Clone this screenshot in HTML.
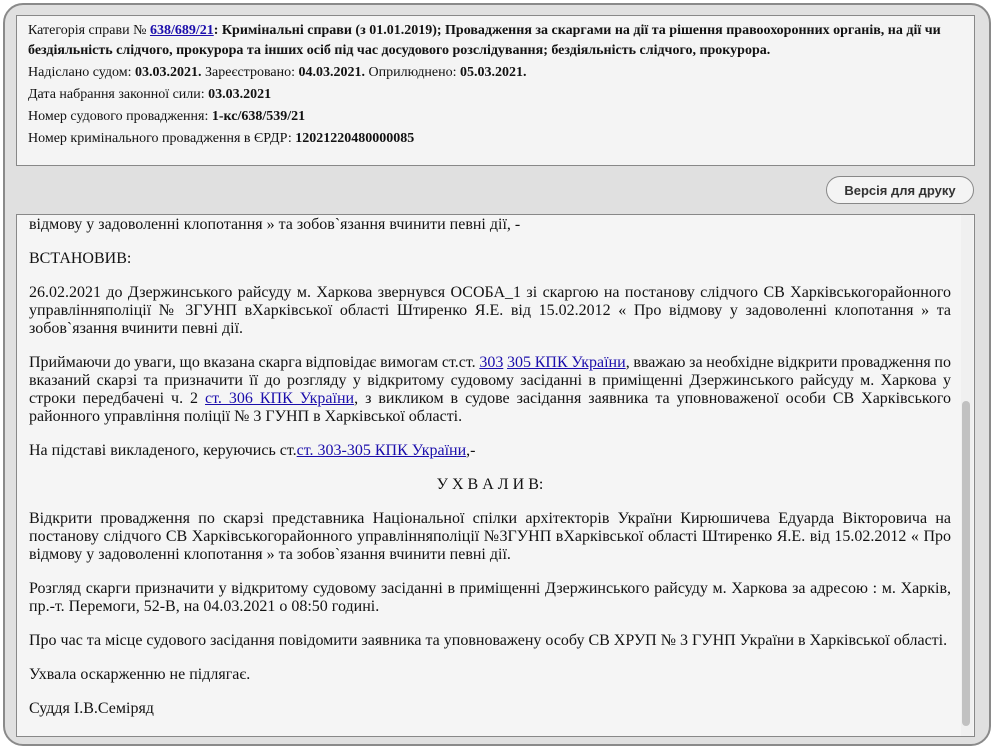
<!DOCTYPE html>
<html><head><meta charset="utf-8"><style>
html,body{margin:0;padding:0;background:#fff;width:995px;height:750px;overflow:hidden}
.outer{position:absolute;left:3px;top:3px;width:984px;height:739px;border:2px solid #8a8a8a;border-radius:20px;background:#e0e0e0}
.top{position:absolute;left:16px;top:15px;width:957px;height:149px;border:1px solid #888;background:#f4f4f4;font:14px/22px "Liberation Serif",serif;color:#111}
.top div{position:absolute;left:11px;white-space:nowrap}
a{color:#1a0dab;text-decoration:underline}
.btn{position:absolute;left:826px;top:176px;width:148px;height:28px;border:1px solid #888;border-radius:15px;background:#f4f4f4;font:bold 13px/28px "Liberation Sans",sans-serif;color:#333;text-align:center;box-sizing:border-box}
.content{position:absolute;left:16px;top:214px;width:957px;height:521px;border:1px solid #888;background:#f5f5f5;overflow:hidden;font:16px/18px "Liberation Serif",serif;color:#111}
.inner{position:absolute;left:12px;top:1px;width:922px}
.inner p{margin:0 0 16px;text-align:justify}
.j{display:block;text-align:justify;text-align-last:justify}
.sb{position:absolute;right:1px;top:0;width:12px;height:521px;background:#f0f0f0}
.th{position:absolute;right:3px;top:186px;width:8px;height:325px;background:#c1c1c1;border-radius:4px}
</style></head><body>
<div class="outer"></div>
<div class="top">
<div style="top:4px">Категорія справи № <a><b>638/689/21</b></a><b>: Кримінальні справи (з 01.01.2019); Провадження за скаргами на дії та рішення правоохоронних органів, на дії чи</b></div>
<div style="top:24px"><b>бездіяльність слідчого, прокурора та інших осіб під час досудового розслідування; бездіяльність слідчого, прокурора.</b></div>
<div style="top:46px">Надіслано судом: <b>03.03.2021.</b> Зареєстровано: <b>04.03.2021.</b> Оприлюднено: <b>05.03.2021.</b></div>
<div style="top:68px">Дата набрання законної сили: <b>03.03.2021</b></div>
<div style="top:90px">Номер судового провадження: <b>1-кс/638/539/21</b></div>
<div style="top:112px">Номер кримінального провадження в ЄРДР: <b>12021220480000085</b></div>
</div>
<div class="btn">Версія для друку</div>
<div class="content">
<div class="inner">
<p>відмову у задоволенні клопотання » та зобов`язання вчинити певні дії, -</p>
<p>ВСТАНОВИВ:</p>
<p><span class="j">26.02.2021 до Дзержинського райсуду м. Харкова звернувся ОСОБА_1 зі скаргою на постанову слідчого СВ Харківськогорайонного</span><span class="j">управлінняполіції №&nbsp;3ГУНП вХарківської області Штиренко Я.Е. від 15.02.2012 « Про відмову у задоволенні клопотання » та</span>зобов`язання вчинити певні дії.</p>
<p><span class="j" style="white-space:nowrap;word-spacing:-2.3px">Приймаючи до уваги, що вказана скарга відповідає вимогам ст.ст. <a>303</a> <a>305 КПК України</a>, вважаю за необхідне відкрити провадження по</span><span class="j">вказаний скарзі та призначити її до розгляду у відкритому судовому засіданні в приміщенні Дзержинського райсуду м. Харкова у</span><span class="j">строки передбачені ч. 2 <a>ст. 306 КПК України</a>, з викликом в судове засідання заявника та уповноваженої особи СВ Харківського</span>районного управління поліції № 3 ГУНП в Харківської області.</p>
<p>На підставі викладеного, керуючись ст.<a>ст. 303-305 КПК України</a>,-</p>
<p style="text-align:center">У Х В А Л И В:</p>
<p>Відкрити провадження по скарзі представника Національної спілки архітекторів України Кирюшичева Едуарда Вікторовича на постанову слідчого СВ Харківськогорайонного управлінняполіції №3ГУНП вХарківської області Штиренко Я.Е. від 15.02.2012 « Про відмову у задоволенні клопотання » та зобов`язання вчинити певні дії.</p>
<p>Розгляд скарги призначити у відкритому судовому засіданні в приміщенні Дзержинського райсуду м. Харкова за адресою : м. Харків, пр.-т. Перемоги, 52-В, на 04.03.2021 о 08:50 годині.</p>
<p>Про час та місце судового засідання повідомити заявника та уповноважену особу СВ ХРУП № 3 ГУНП України в Харківської області.</p>
<p>Ухвала оскарженню не підлягає.</p>
<p>Суддя І.В.Семіряд</p>
</div>
<div class="sb"><div class="th"></div></div>
</div>
</body></html>
